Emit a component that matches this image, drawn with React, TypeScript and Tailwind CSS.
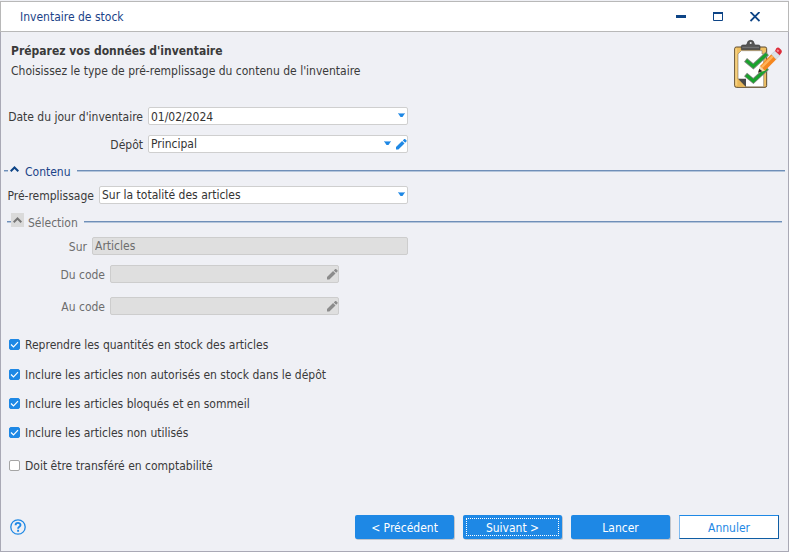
import { useState } from "react";
import type { ReactNode } from "react";

const options = [
  { id: "quantites", label: "Reprendre les quantités en stock des articles", checked: true, space: "" },
  { id: "autorises", label: "Inclure les articles non autorisés en stock dans le dépôt", checked: true, space: "mt-3" },
  { id: "bloques", label: "Inclure les articles bloqués et en sommeil", checked: true, space: "mt-[11px]" },
  { id: "utilises", label: "Inclure les articles non utilisés", checked: true, space: "mt-[11px]" },
  { id: "compta", label: "Doit être transféré en comptabilité", checked: false, space: "mt-[15px]" },
];

const fieldClass =
  "block h-[18px] w-full appearance-none rounded-xs border border-[#cfcfcf] bg-white px-0.5 pt-px leading-[15px] text-[#333] outline-none disabled:border-[#cdcdcd] disabled:bg-[#dfdfdf] disabled:text-[#6d6d6d] disabled:opacity-100";

const buttonClass = "h-6 w-[99px] rounded-xs bg-[#1e88e5] text-white shadow-[1px_1px_0_#c3c6cc]";

function Arrow() {
  return (
    <svg width="7" height="6" viewBox="0 0 7 6">
      <path d="M0 0h7v1H0z" fill="#7db9f0" />
      <path d="M.5 1h6L4.500 4h-2z" fill="#1e88e5" />
    </svg>
  );
}

function Pencil() {
  return (
    <svg width="11" height="11" viewBox="0 0 11 11" fill="currentColor">
      <path d="M0 8.100V10.500h2.400L8.500 4.400 6.100 2zM6.800 1.400l2.400 2.400 1.200-1.200c.4-.4.4-.9 0-1.300L9.300.2c-.4-.3-.9-.3-1.300 0z" />
    </svg>
  );
}

function Clipboard() {
  return (
    <svg width="50" height="50" viewBox="0 0 150 150" className="shrink-0">
      <rect x="8" y="27" width="96" height="121" rx="5" fill="#efc062" stroke="#5d4b2e" strokeWidth="3" />
      <path d="M12 32v110" stroke="#ffe09a" strokeWidth="3" />
      <path d="M28 38h62v10h5v98H42L18 122V48z" fill="#fff" stroke="#8b8477" strokeWidth="2" />
      <path d="M18 122l24 2v22h-24z" fill="#e9b85b" />
      <path d="M18 122h24v25z" fill="#4a4a4a" />
      <path d="M28 35V25q0-4 5-4h8q4 0 5-6 1-8 10-8t10 8q1 6 5 6h8q5 0 5 4v10z" fill="#555" stroke="#3d3d3d" strokeWidth="2" />
      <circle cx="56" cy="15" r="3" fill="#eee" />
      <path d="M31 28h50" stroke="#8b8b8b" strokeWidth="2" />
      <g fill="none" strokeLinecap="square">
        <path d="M46 70l18 15 37-34" stroke="#788578" strokeWidth="14" />
        <path d="M46 70l18 15 37-34" stroke="#18a32c" strokeWidth="9" />
        <path d="M46 114l18 15 37-34" stroke="#788578" strokeWidth="14" />
        <path d="M46 114l18 15 37-34" stroke="#18a32c" strokeWidth="9" />
      </g>
      <path d="M78 104l6-21 16 15z" fill="#f7d7a5" />
      <path d="M78 104l4-12 9 8z" fill="#252525" />
      <path d="M84 84l34-35 15 15-34 34z" fill="#f5871f" />
      <path d="M87 85l35-35 5 5-35 35z" fill="#ffb45a" />
      <path d="M118 49l11-10 15 13-12 12z" fill="#dbe1e6" stroke="#a5adb5" strokeWidth="1" />
      <path d="M129 39l4-8q3-4 8-2l7 7q3 5 0 9l-5 7z" fill="#dd2c3a" />
      <path d="M133 38l4-4 5 4-4 5z" fill="#f58a90" />
    </svg>
  );
}

type RowProps = { id: string; label: string; labelWidth: string; width: string; disabled?: boolean; children: ReactNode };

function Row({ id, label, labelWidth, width, disabled, children }: RowProps) {
  return (
    <div className="flex items-center gap-[5px]">
      <label htmlFor={id} className={`shrink-0 whitespace-nowrap pt-0.5 text-right ${labelWidth} ${disabled ? "text-[#6d6d6d]" : ""}`}>
        {label}
      </label>
      <div className={`relative ${width}`}>{children}</div>
    </div>
  );
}

function SectionTitle({ title, disabled }: { title: string; disabled?: boolean }) {
  return (
    <div className={`flex h-4 items-center ${disabled ? "pl-[6px] pr-1.5" : "pl-[3px] pr-[3px]"}`}>
      <span className="h-0.5 w-1 border-t border-[#6f8fb8] bg-[#b4c5db]" />
      <button
        type="button"
        disabled={disabled}
        aria-label={`Replier ${title}`}
        className={`mb-1 flex h-3.5 w-[13px] items-center justify-center ${disabled ? "bg-[#dadada] text-[#777]" : "text-[#0d4486]"}`}
      >
        <svg width="9" height="6" viewBox="0 0 9 6" fill="none" stroke="currentColor" strokeWidth="2">
          <path d="M.7 5.300L4.500 1.500l3.800 3.800" />
        </svg>
      </button>
      <h2 className={`ml-1 mr-1.5 pt-0.5 ${disabled ? "text-[#6d6d6d]" : "text-[#1b4388]"}`}>{title}</h2>
      <span className="h-0.5 flex-1 border-t border-[#6f8fb8] bg-[#b4c5db]" />
    </div>
  );
}

export default function App() {
  const [checks, setChecks] = useState(options.map((o) => o.checked));

  const toggle = (index: number) => setChecks(checks.map((c, i) => (i === index ? !c : c)));

  return (
    <div className="flex min-h-screen flex-col bg-[#eff0f5] pt-px font-['DejaVu_Sans_Condensed','DejaVu_Sans',sans-serif] text-[12px] leading-4 text-[#3a3a3a]">
      <header className="flex h-[31px] items-center justify-between border border-[#b8b8b8] bg-white pl-[19px] pr-[27px] text-[#1b4388]">
        <h1>Inventaire de stock</h1>
        <div className="flex items-center gap-[25px]">
          <button type="button" aria-label="Réduire" className="flex w-3 justify-center">
            <svg width="10" height="10" viewBox="0 0 10 10">
              <path d="M0 3h10v3H0z" fill="#0d4486" />
            </svg>
          </button>
          <button type="button" aria-label="Agrandir" className="flex w-3 justify-center">
            <svg width="10" height="10" viewBox="0 0 10 10">
              <path d="M.5.5h9v8h-9z" fill="none" stroke="#0d4486" />
              <path d="M0 0h10v2H0z" fill="#0d4486" />
            </svg>
          </button>
          <button type="button" aria-label="Fermer" className="flex w-3 justify-center">
            <svg width="10" height="10" viewBox="0 0 10 10">
              <path d="M.5 0l9 9M9.500 0l-9 9" stroke="#0d4486" strokeWidth="1.800" />
            </svg>
          </button>
        </div>
      </header>

      <main className="flex flex-1 flex-col border-x border-b border-[#a9a9b5]">
        <div className="flex h-[75px] items-start justify-between pl-2.5 pr-1.5 pt-1.5">
          <div className="pt-[5px]">
            <p className="font-bold">Préparez vos données d'inventaire</p>
            <p className="mt-1">Choisissez le type de pré-remplissage du contenu de l'inventaire</p>
          </div>
          <Clipboard />
        </div>

        <div className="flex flex-col gap-2.5">
          <Row id="date" label="Date du jour d'inventaire" labelWidth="w-[142px]" width="w-[260px]">
            <input id="date" type="text" defaultValue="01/02/2024" className={fieldClass} />
            <button type="button" aria-label="Ouvrir le calendrier" className="absolute inset-y-0 right-[3px] flex items-center">
              <Arrow />
            </button>
          </Row>
          <Row id="depot" label="Dépôt" labelWidth="w-[142px]" width="w-[260px]">
            <select id="depot" className={fieldClass}>
              <option>Principal</option>
            </select>
            <span className="pointer-events-none absolute inset-y-0 right-[17px] flex items-center">
              <Arrow />
            </span>
            <button type="button" aria-label="Modifier le dépôt" className="absolute inset-y-0 right-px flex items-center text-[#1e88e5]">
              <Pencil />
            </button>
          </Row>
        </div>

        <section className="mt-2.5 flex flex-col gap-[7px]">
          <SectionTitle title="Contenu" />
          <Row id="remplissage" label="Pré-remplissage" labelWidth="w-[93px]" width="w-[309px]">
            <select id="remplissage" className={fieldClass}>
              <option>Sur la totalité des articles</option>
            </select>
            <span className="pointer-events-none absolute inset-y-0 right-[3px] flex items-center">
              <Arrow />
            </span>
          </Row>
        </section>

        <section className="mt-2.5">
          <SectionTitle title="Sélection" disabled />
          <div className="mt-[7px]">
            <Row id="sur" label="Sur" labelWidth="w-[86px]" width="w-[316px]" disabled>
              <select id="sur" disabled className={fieldClass}>
                <option>Articles</option>
              </select>
            </Row>
          </div>
          <div className="mt-2.5 flex flex-col gap-3.5">
            <Row id="du-code" label="Du code" labelWidth="w-[104px]" width="w-[229px]" disabled>
              <input id="du-code" type="text" disabled className={fieldClass} />
              <button type="button" disabled aria-label="Choisir le premier code" className="absolute inset-y-0 right-px flex items-center text-[#8c8c8c]">
                <Pencil />
              </button>
            </Row>
            <Row id="au-code" label="Au code" labelWidth="w-[104px]" width="w-[229px]" disabled>
              <input id="au-code" type="text" disabled className={fieldClass} />
              <button type="button" disabled aria-label="Choisir le dernier code" className="absolute inset-y-0 right-px flex items-center text-[#8c8c8c]">
                <Pencil />
              </button>
            </Row>
          </div>
        </section>

        <div className="mt-5 flex flex-col items-start pl-2">
          {options.map((option, index) => (
            <label key={option.id} className={`flex items-center gap-[5px] ${option.space}`}>
              <span className="relative flex">
                <input
                  type="checkbox"
                  checked={checks[index]}
                  onChange={() => toggle(index)}
                  className="peer size-[11px] appearance-none rounded-xs border border-[#a5a5a5] bg-white checked:border-[#1e88e5] checked:bg-[#1e88e5]"
                />
                <svg width="11" height="11" viewBox="0 0 11 11" className="pointer-events-none absolute inset-0 hidden peer-checked:block">
                  <path d="M2 5.500l2.500 2.500 4.500-4.800" fill="none" stroke="#fff" strokeWidth="1.200" />
                </svg>
              </span>
              <span className="pt-0.5">{option.label}</span>
            </label>
          ))}
        </div>

        <footer className="mt-auto flex items-center justify-between pb-3 pl-[9px] pr-[9px]">
          <button type="button" aria-label="Aide" className="text-[#1e88e5]">
            <svg width="16" height="16" viewBox="0 0 16 16" fill="none" stroke="currentColor">
              <circle cx="8" cy="8" r="7.200" strokeWidth="1.300" />
              <path d="M5.600 6.200c0-3 4.900-3 4.900-.2 0 1.800-2.400 1.800-2.400 3.700M8.100 10.800v2" strokeWidth="1.900" />
            </svg>
          </button>
          <div className="flex gap-[9px]">
            <button type="button" className={`${buttonClass} pt-0.5`}>
              &lt; Précédent
            </button>
            <button type="button" className={`${buttonClass} p-[3px]`}>
              <span className="flex h-full items-center justify-center border border-dotted border-white pt-0.5">Suivant &gt;</span>
            </button>
            <button type="button" className={`${buttonClass} pt-0.5`}>
              Lancer
            </button>
            <button type="button" className="h-6 w-[100px] border border-b-[#0f5da3] border-l-[#7db9f0] border-r-[#0f5da3] border-t-[#1e88e5] bg-white pt-0.5 text-[#1e88e5]">
              Annuler
            </button>
          </div>
        </footer>
      </main>
    </div>
  );
}
